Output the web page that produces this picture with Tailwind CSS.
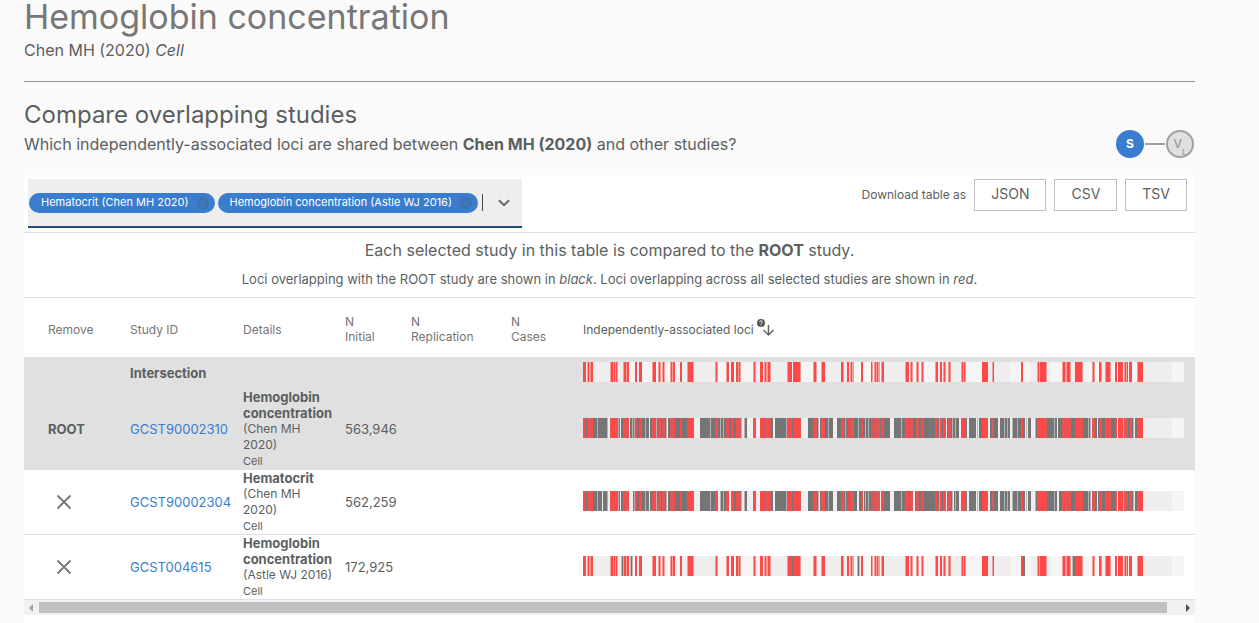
<!DOCTYPE html>
<html lang="en">
<head>
<meta charset="utf-8">
<meta name="viewport" content="width=device-width, initial-scale=1">
<title>Hemoglobin concentration</title>
<script src="https://cdn.jsdelivr.net/npm/@tailwindcss/browser@4"></script>
</head>
<body class="min-h-screen bg-[#fafafa] font-['Inter',sans-serif] text-[#5a5f5f]">
<main class="mr-16 ml-6">
  <header>
    <h1 class="text-[34px] leading-[34px] text-[#777]">Hemoglobin concentration</h1>
    <p class="mt-1 text-base">Chen MH (2020) <em>Cell</em></p>
    <hr class="mt-[19px] border-[#8f9494]">
  </header>

  <section class="mt-[17px] flex items-end justify-between">
    <div>
      <h2 class="text-2xl">Compare overlapping studies</h2>
      <p class="mt-px text-base">Which independently-associated loci are shared between <strong>Chen MH (2020)</strong> and other studies?</p>
    </div>
    <div class="mr-px -mb-0.5 flex items-center">
      <span class="flex size-7 items-center justify-center rounded-full bg-[#3a7dce] text-xs font-bold text-white">S</span>
      <span class="mx-px h-0.5 w-5 bg-[#a0a0a0]"></span>
      <span class="flex size-7 items-center justify-center rounded-full border-2 border-[#a0a0a0] bg-[#e0e0e0] text-xs font-medium text-[#9a9a9a]">V<sub class="mt-3 text-[8px]">L</sub></span>
    </div>
  </section>

  <section class="mt-[19px] bg-white text-[13px]">
    <div class="flex items-start justify-between border-b border-[#e0e0e0] px-1 pt-1 pb-1 pr-2">
      <div class="flex h-[49px] w-[494px] items-center border-b-2 border-[#24497f] bg-[#eee] px-px text-[11px] text-white">
        <span class="flex h-5 items-center rounded-full bg-[#3a7dce] pl-3 pr-1.5">Hematocrit (Chen MH 2020)
          <button aria-label="Remove Hematocrit (Chen MH 2020)" class="ml-2"><svg class="size-3" viewBox="0 0 12 12"><circle cx="6" cy="6" r="6" fill="#3f72ad"/><path d="M3.5 3.5l5 5M8.5 3.5l-5 5" stroke="#3a7dce" stroke-width="1.2"/></svg></button></span>
        <span class="ml-[3px] flex h-5 items-center rounded-full bg-[#3a7dce] pl-3 pr-1.5">Hemoglobin concentration (Astle WJ 2016)
          <button aria-label="Remove Hemoglobin concentration (Astle WJ 2016)" class="ml-2"><svg class="size-3" viewBox="0 0 12 12"><circle cx="6" cy="6" r="6" fill="#3f72ad"/><path d="M3.5 3.5l5 5M8.5 3.5l-5 5" stroke="#3a7dce" stroke-width="1.2"/></svg></button></span>
        <input aria-label="Add study" class="ml-1 h-[17px] w-2 min-w-0 flex-1 border-l border-[#444] bg-transparent outline-none">
        <button aria-label="Show studies" class="mr-[11px]"><svg class="h-2 w-3" viewBox="0 0 12 8" fill="none" stroke="#666" stroke-width="2"><path d="M0.8 1.2L6 6.2l5.200-5"/></svg></button>
      </div>
      <div class="flex items-center gap-2">
        <span class="text-xs">Download table as</span>
        <button class="h-8 border border-[#bdbdbd] px-4 pb-0.5 text-sm">JSON</button>
        <button class="h-8 border border-[#bdbdbd] px-4 pb-0.5 text-sm">CSV</button>
        <button class="h-8 border border-[#bdbdbd] px-4 pb-0.5 text-sm">TSV</button>
      </div>
    </div>

    <div class="border-b border-[#e0e0e0] pt-[5px] pb-2 text-center">
      <p class="text-base">Each selected study in this table is compared to the <strong>ROOT</strong> study.</p>
      <p class="mt-[7px] leading-5">Loci overlapping with the ROOT study are shown in <em>black</em>. Loci overlapping across all selected studies are shown in <em>red</em>.</p>
    </div>

    <table class="w-full table-fixed border-collapse text-left leading-4">
      <colgroup>
        <col class="w-[106px]"><col class="w-[113px]"><col class="w-[102px]"><col class="w-[66px]"><col class="w-[100px]"><col class="w-[72px]"><col>
      </colgroup>
      <thead>
        <tr class="h-[59px] text-xs leading-[15px] text-[#757575]">
          <th class="pt-1 pl-6 font-normal">Remove</th>
          <th class="pt-1 font-normal">Study ID</th>
          <th class="pt-1 font-normal">Details</th>
          <th class="pt-0.5 font-normal">N<br>Initial</th>
          <th class="pt-0.5 font-normal">N<br>Replication</th>
          <th class="pt-0.5 font-normal">N<br>Cases</th>
          <th class="pt-1 font-normal text-[#5a5f5f]"><span class="flex items-center">Independently-associated loci<svg class="mb-1 ml-0.5 h-5 w-5" viewBox="0 0 20 20" fill="none"><circle cx="5" cy="5" r="4" fill="#555"/><path d="M3.700 4.100c0-2 2.800-1.700 2.600 0-.1.800-1.300.8-1.300 1.700M5 6.700v1" stroke="#fff" stroke-width=".9"/><path d="M12.500 7v9.500M7.500 12l5 5 5-5" stroke="#666" stroke-width="1.500"/></svg></span></th>
        </tr>
      </thead>
      <tbody>
        <tr class="h-8 bg-[#e0e0e0]">
          <td></td><td class="font-bold">Intersection</td><td></td><td></td><td></td><td></td>
          <td class="pr-[11px] pb-0.5"><svg data-track="intersection" class="block h-5 w-full" viewBox="0 0 601 20" preserveAspectRatio="none"></svg></td>
        </tr>
        <tr class="border-b border-[#e0e0e0] bg-[#e0e0e0]">
          <td class="pl-6 font-bold">ROOT</td>
          <td><a href="#GCST90002310" class="text-[#3a7dce]">GCST90002310</a></td>
          <td><strong class="font-bold">Hemoglobin concentration</strong><div class="w-20 text-xs leading-4">(Chen MH 2020)</div><div class="text-[11px] leading-4">Cell</div></td>
          <td>563,946</td><td></td><td></td>
          <td class="pr-[11px] pb-0.5"><svg data-track="root" class="block h-5 w-full" viewBox="0 0 601 20" preserveAspectRatio="none"></svg></td>
        </tr>
        <tr class="border-b border-[#e0e0e0]">
          <td class="pl-8"><button aria-label="Remove GCST90002304" class="block"><svg class="size-4" viewBox="0 0 16 16" stroke="#777" stroke-width="1.800"><path d="M1.500 1.500l13 13M14.500 1.500l-13 13"/></svg></button></td>
          <td><a href="#GCST90002304" class="text-[#3a7dce]">GCST90002304</a></td>
          <td><strong class="font-bold">Hematocrit</strong><div class="w-20 text-xs leading-4">(Chen MH 2020)</div><div class="text-[11px] leading-4">Cell</div></td>
          <td>562,259</td><td></td><td></td>
          <td class="pr-[11px] pb-0.5"><svg data-track="hematocrit" class="block h-5 w-full" viewBox="0 0 601 20" preserveAspectRatio="none"></svg></td>
        </tr>
        <tr class="border-b border-[#e0e0e0]">
          <td class="pl-8"><button aria-label="Remove GCST004615" class="block"><svg class="size-4" viewBox="0 0 16 16" stroke="#777" stroke-width="1.800"><path d="M1.500 1.500l13 13M14.500 1.500l-13 13"/></svg></button></td>
          <td><a href="#GCST004615" class="text-[#3a7dce]">GCST004615</a></td>
          <td><strong class="font-bold">Hemoglobin concentration</strong><div class="text-xs leading-4">(Astle WJ 2016)</div><div class="text-[11px] leading-4">Cell</div></td>
          <td>172,925</td><td></td><td></td>
          <td class="pr-[11px] pb-0.5"><svg data-track="astle" class="block h-5 w-full" viewBox="0 0 601 20" preserveAspectRatio="none"></svg></td>
        </tr>
      </tbody>
    </table>
    <div class="flex h-[15px] items-center bg-[#f1f1f1]">
      <svg class="h-2 w-[15px]" viewBox="0 0 15 8"><path d="M9 0v8L5 4z" fill="#a3a3a3"/></svg>
      <div class="mr-[13px] h-[11px] flex-1 bg-[#c1c1c1]"></div>
      <svg class="h-2 w-[15px]" viewBox="0 0 15 8"><path d="M6 0v8l4-4z" fill="#505050"/></svg>
    </div>
    <div class="h-2"></div>
  </section>
</main>
<script>
// Chromosome end positions, then loci as "start-end" runs along the genome.
const bands = [0,48,96,134,171,206,239,270,299,326,352,379,404,427,448,467,485,500,516,527,539,549,559,589,601];
const red = "0-3 5-6 8-10 28-30 31-32 33-34 41-43 44-46 52-54 56-59 70-73 76-77 80-81 88-89 90-92 97-99 105-109 109-110 133-134 144-146 148-151 153-155 156-157 171-172 177-180 182-183 185-187 205-209 210-217 231-233 239-242 258-260 264-266 268-269 278-280 288-289 292-293 294-295 299-301 323-326 328-329 334-335 339-340 353-355 357-359 361-362 366-367 379-380 381-382 399-402 402-405 410-411 438-440 455-456 457-463 480-482 484-487 492-499 510-511 516-518 523-527 532-534 535-540 542-543 544-545 546-549 555-560";
const softRed = "4-5 6-8 27-28 30-31 32-33 34-35 40-41 43-44 69-70 75-76 77-78 79-80 81-82 87-88 89-90 104-105 110-111 132-133 134-135 143-144 155-156 157-158 170-171 172-173 181-182 183-185 187-188 204-205 217-218 230-231 233-234 238-239 260-261 267-268 269-271 289-290 291-292 293-294 295-297 298-299 322-323 327-328 329-330 333-334 335-336 338-339 340-341 352-353 360-361 362-363 365-366 367-368 378-379 380-381 382-383 409-410 454-455 456-457 463-464 479-480 482-484 487-488 499-500 509-510 511-512 518-519 522-523 527-528 541-542 543-544 554-555";
const light = "14-15 24-25 35-36 49-50 51-52 62-63 73-74 83-84 127-128 137-138 140-141 158-159 161-162 203-204 235-236 245-246 262-263 275-276 282-283 285-286 318-319 356-357 369-370 372-373 394-395 406-407 421-422 424-425 429-430 434-435 443-444 452-453 471-472 505-506 507-508 540-541 550-551";
const rootGaps = "25-28 37-38 46-47 66-67 84-85 111-117 159-161 164-170 173-177 190-192 218-225 236-237 250-254 267-268 307-311 363-364 376-378 384-386 393-394 395-396 405-407 415-417 427-429 442-443 444-445 448-452 474-475 508-509 514-515 534-535 551-552";
const hemGaps = rootGaps + " 19-20 47-50 135-137 146-148 274-276 279-281 297-298 330-332 370-371 475-476";
const draw = (runs, fill) => '<path shape-rendering="crispEdges" fill="' + fill + '" d="' + runs.split(" ").map(r => {
  const [a, b] = r.split("-"); return "M" + a + " 0H" + b + "V20H" + a + "z"; }).join("") + '"/>';
const background = bands.slice(1).map((end, i) => draw(bands[i] + "-" + end, i % 2 ? "#f5f5f5" : "#eeeeee")).join("");
const invert = gaps => {
  let x = 0; const out = [];
  for (const [a, b] of gaps.split(" ").map(g => g.split("-").map(Number)).sort((p, q) => p[0] - q[0])) {
    if (a > x) out.push(x + "-" + a);
    x = Math.max(x, b);
  }
  out.push(x + "-560"); return out.join(" ");
};
const shared = soft => draw(softRed, soft) + draw(red, "#ff4848");
const dense = gaps => background + draw(invert(gaps), "#757575") + draw(light, "#b3b3b3") + draw(gaps, "#eeeeee") + shared("#dc5a5a");
const tracks = {
  intersection: background + shared("#fa9a96"),
  root: dense(rootGaps),
  hematocrit: dense(hemGaps),
  astle: background + draw("38-39 47-48 49-50 274-275 276-277 489-490", "#b8b8b8") + shared("#fa9a96") + draw("39-40 48-49 209-210 275-276 440-442 490-492", "#757575")
};
document.querySelectorAll("[data-track]").forEach(el => el.innerHTML = tracks[el.dataset.track]);
</script>
</body>
</html>
